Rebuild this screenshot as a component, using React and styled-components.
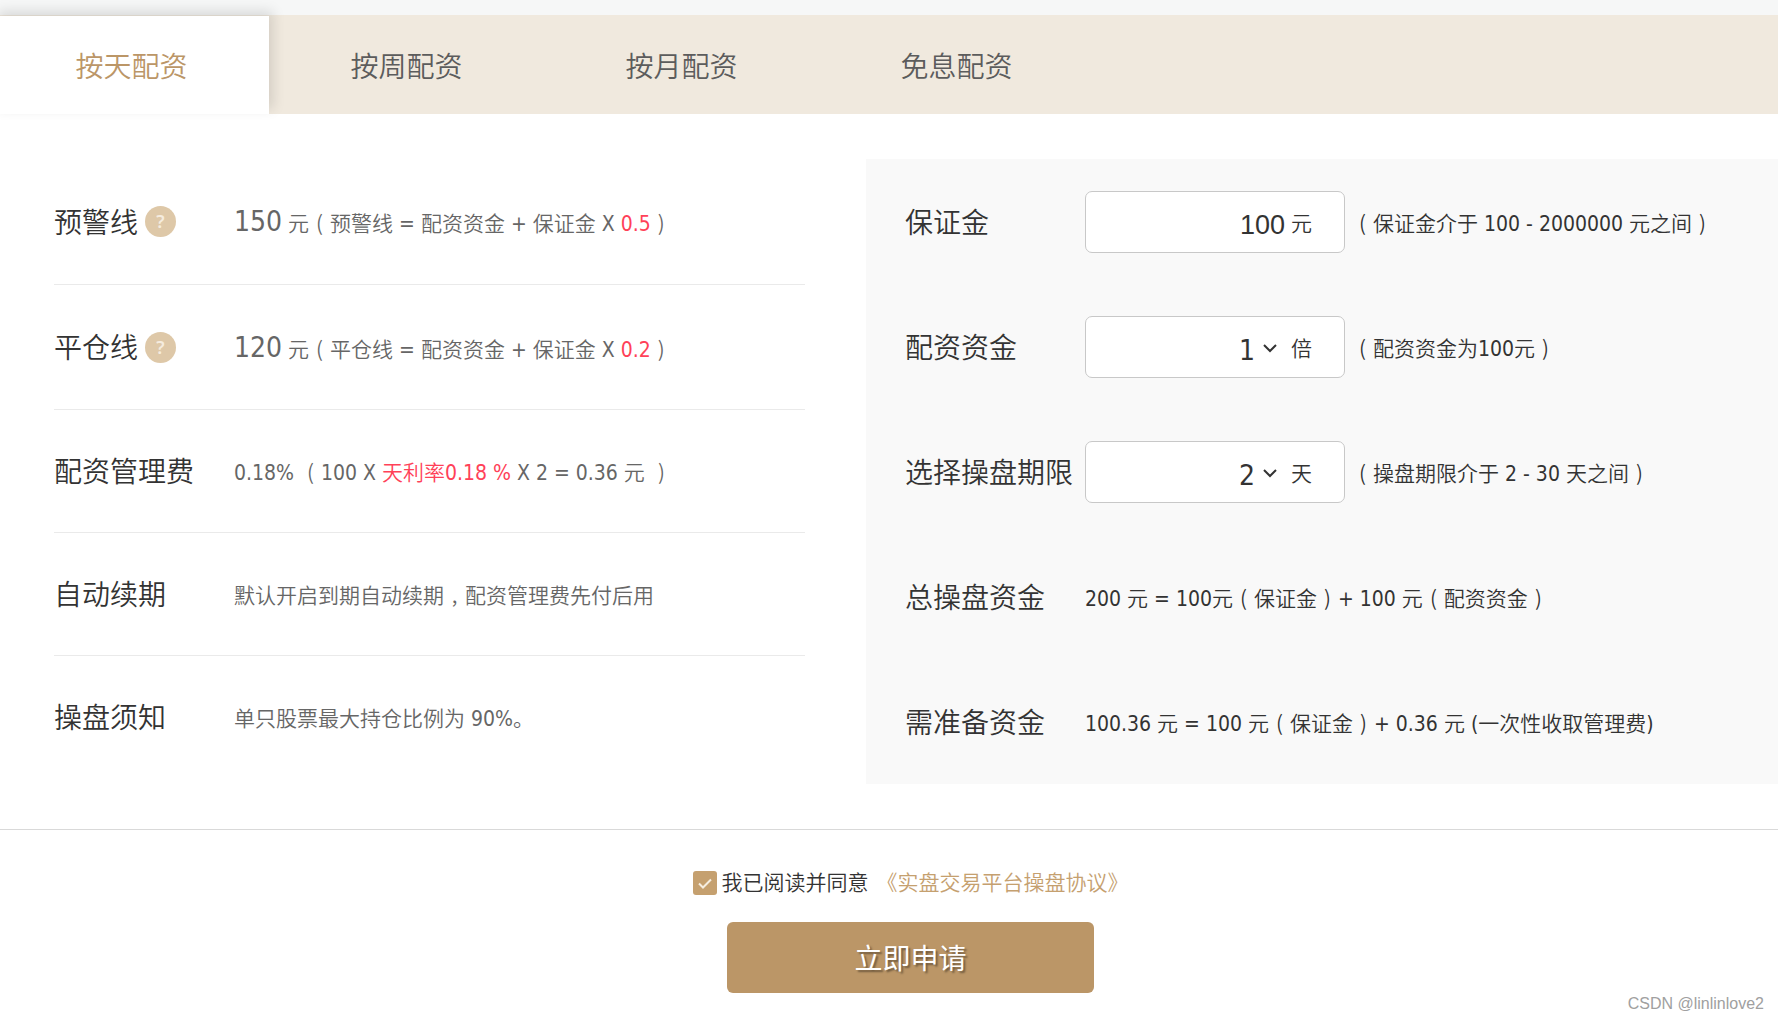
import React, { useState } from "react";
import styled, { createGlobalStyle } from "styled-components";

const GlobalStyle = createGlobalStyle`
  * {
    box-sizing: border-box;
  }
  body {
    margin: 0;
    background: #fff;
    color: #333;
    font-family: "DejaVu Sans Condensed", "Noto Sans CJK SC", sans-serif;
    font-size: 21px;
    font-weight: 350;
    line-height: 32px;
    overflow-x: hidden;
  }
  button, input, select {
    font: inherit;
    color: inherit;
  }
`;
const TopStrip = styled.div`
  height: 15px;
  background: #f6f7f7;
`;
const Tabs = styled.nav`
  display: flex;
  height: 99px;
  margin-left: -6px;
  background: #f0e9de;
`;
const Tab = styled.button`
  flex: 0 0 275px;
  border: none;
  margin-top: ${(props) => (props.$active ? "1px" : "0")};
  padding: 6px 0 0;
  font-size: 28px;
  cursor: pointer;
  color: ${(props) => (props.$active ? "#bb9667" : "#5c5c5c")};
  background: ${(props) => (props.$active ? "#fff" : "transparent")};
  box-shadow: ${(props) =>
    props.$active ? "4px -5px 12px rgba(0, 0, 0, 0.12)" : "none"};
`;
const Main = styled.main`
  display: grid;
  grid-template-columns: minmax(0, 14fr) minmax(0, 17fr);
  column-gap: 61px;
  padding: 45px 0 45px 54px;
  border-bottom: 1px solid #d9d9d9;
`;
const Info = styled.dl`
  margin: 0;
  color: #666;
`;
const InfoRow = styled.div`
  display: flex;
  align-items: center;
  min-height: ${(props) => (props.$tall ? "125px" : "123px")};
  & + & {
    border-top: 1px solid #eaeaea;
  }
`;
const Term = styled.dt`
  flex: 0 0 180px;
  display: flex;
  align-items: center;
  gap: 7px;
  font-size: 28px;
  color: #333;
  white-space: nowrap;
  & span {
    padding-top: 4px;
  }
`;
const Value = styled.dd`
  margin: 0;
  padding-top: 3px;
  white-space: nowrap;
`;
const Help = styled.button`
  width: 31px;
  height: 31px;
  border: none;
  border-radius: 50%;
  padding: 0;
  background: #dec8a8;
  color: #f5ecdf;
  font-family: "Noto Sans", sans-serif;
  font-size: 18px;
  font-weight: 600;
  line-height: 31px;
`;
const Big = styled.span`
  font-size: 28px;
`;
const Red = styled.span`
  color: #ff4158;
`;
/* brackets and commas sit in the middle of a full-width cell */
const Cell = styled.span`
  display: inline-block;
  width: 1em;
  font-family: "Noto Sans CJK SC", sans-serif;
  line-height: 1;
  text-align: center;
`;
const Panel = styled.form`
  padding-left: 39px;
  background: #f9f9f9;
`;
const FormRow = styled.div`
  display: flex;
  align-items: center;
  height: 125px;
  white-space: nowrap;
`;
const Label = styled.label`
  flex: 0 0 180px;
  padding-top: 4px;
  font-size: 28px;
`;
const Field = styled.div`
  flex: none;
  width: 260px;
  display: flex;
  align-items: center;
  height: 62px;
  margin-right: 7px;
  padding: 4px 32px 0 16px;
  border: 1px solid #c8c8c8;
  border-radius: 7px;
  background: #fff;
`;
const Amount = styled.input`
  flex: 1;
  min-width: 0;
  border: none;
  padding: 2px 0 0;
  margin-right: 6px;
  outline: none;
  background: transparent;
  font-family: "Liberation Sans", Arial, sans-serif;
  font-size: 27px;
  text-align: right;
`;
const Select = styled.select`
  flex: 1;
  appearance: none;
  border: none;
  padding: 4px 0 0;
  outline: none;
  background: transparent;
  font-size: 28px;
  text-align: right;
  text-align-last: right;
`;
const Chevron = styled.svg`
  flex: none;
  margin: 0 14px 0 8px;
  pointer-events: none;
`;
const Text = styled.div`
  padding-top: 4px;
`;
const Footer = styled.footer`
  display: flex;
  flex-direction: column;
  align-items: center;
  padding: 37px 0 0 43px;
`;
const Agree = styled.div`
  display: flex;
  align-items: center;
  height: 32px;
`;
const Check = styled.input`
  appearance: none;
  width: 24px;
  height: 24px;
  margin: 0 5px 0 0;
  border-radius: 3px;
  background: #c5a06f;
  &:checked {
    background: #c5a06f
      url("data:image/svg+xml,%3Csvg xmlns='http://www.w3.org/2000/svg' viewBox='0 0 24 24'%3E%3Cpath d='M6 12.5l4 4 8-8' fill='none' stroke='%23f5ede0' stroke-width='2'/%3E%3C/svg%3E")
      center / 24px 24px no-repeat;
  }
`;
const Agreement = styled.a`
  margin-left: 8px;
  color: #c5a06f;
  text-decoration: none;
`;
const Apply = styled.button`
  width: 367px;
  height: 71px;
  margin-top: 23px;
  border: none;
  border-radius: 6px;
  padding: 4px 0 0;
  background: #bb9667;
  color: #fff;
  font-size: 28px;
  font-weight: 400;
  text-shadow: 2px 2px 2px rgba(0, 0, 0, 0.4);
  cursor: pointer;
`;
const Watermark = styled.div`
  padding: 3px 14px 7px 0;
  color: #a0a0a0;
  font: 16px/16px "Liberation Sans", Arial, sans-serif;
  text-align: right;
`;

const tabs = ["按天配资", "按周配资", "按月配资", "免息配资"];

const Open = () => <Cell>(</Cell>;
const Close = () => <Cell>)</Cell>;

const Arrow = () => (
  <Chevron width="14" height="9" viewBox="0 0 14 9" aria-hidden="true">
    <path d="M1 1l6 6 6-6" fill="none" stroke="#333" strokeWidth="2" />
  </Chevron>
);

const App = () => {
  const [active, setActive] = useState(0);
  const [amount, setAmount] = useState("100");
  const [times, setTimes] = useState("1");
  const [days, setDays] = useState("2");
  const [agreed, setAgreed] = useState(true);
  return (
    <>
      <GlobalStyle />
      <TopStrip />
      <Tabs>
        {tabs.map((tab, index) => (
          <Tab
            key={tab}
            type="button"
            $active={index === active}
            onClick={() => setActive(index)}
          >
            {tab}
          </Tab>
        ))}
      </Tabs>
      <Main>
        <Info>
          <InfoRow $tall>
            <Term>
              <span>预警线</span>
              <Help type="button">?</Help>
            </Term>
            <Value>
              <Big>150</Big> 元<Open />
              预警线 = 配资资金 + 保证金 X <Red>0.5</Red>
              <Close />
            </Value>
          </InfoRow>
          <InfoRow $tall>
            <Term>
              <span>平仓线</span>
              <Help type="button">?</Help>
            </Term>
            <Value>
              <Big>120</Big> 元<Open />
              平仓线 = 配资资金 + 保证金 X <Red>0.2</Red>
              <Close />
            </Value>
          </InfoRow>
          <InfoRow>
            <Term>
              <span>配资管理费</span>
            </Term>
            <Value>
              0.18% <Open />
              100 X <Red>天利率0.18 %</Red> X 2 = 0.36 元 <Close />
            </Value>
          </InfoRow>
          <InfoRow>
            <Term>
              <span>自动续期</span>
            </Term>
            <Value>
              默认开启到期自动续期<Cell>,</Cell>配资管理费先付后用
            </Value>
          </InfoRow>
          <InfoRow>
            <Term>
              <span>操盘须知</span>
            </Term>
            <Value>单只股票最大持仓比例为 90%。</Value>
          </InfoRow>
        </Info>
        <Panel id="apply" onSubmit={(e) => e.preventDefault()}>
          <FormRow>
            <Label htmlFor="amount">保证金</Label>
            <Field>
              <Amount
                id="amount"
                value={amount}
                onChange={(e) => setAmount(e.target.value)}
              />
              元
            </Field>
            <Text>
              <Open />
              保证金介于 100 - 2000000 元之间
              <Close />
            </Text>
          </FormRow>
          <FormRow>
            <Label htmlFor="times">配资资金</Label>
            <Field>
              <Select
                id="times"
                value={times}
                onChange={(e) => setTimes(e.target.value)}
              >
                {[1, 2, 3, 4, 5].map((n) => (
                  <option key={n}>{n}</option>
                ))}
              </Select>
              <Arrow />倍
            </Field>
            <Text>
              <Open />
              配资资金为100元
              <Close />
            </Text>
          </FormRow>
          <FormRow>
            <Label htmlFor="days">选择操盘期限</Label>
            <Field>
              <Select
                id="days"
                value={days}
                onChange={(e) => setDays(e.target.value)}
              >
                {[2, 5, 10, 20, 30].map((n) => (
                  <option key={n}>{n}</option>
                ))}
              </Select>
              <Arrow />天
            </Field>
            <Text>
              <Open />
              操盘期限介于 2 - 30 天之间
              <Close />
            </Text>
          </FormRow>
          <FormRow>
            <Label as="span">总操盘资金</Label>
            <Text>
              200 元 = 100元
              <Open />
              保证金
              <Close />+ 100 元<Open />
              配资资金
              <Close />
            </Text>
          </FormRow>
          <FormRow>
            <Label as="span">需准备资金</Label>
            <Text>
              100.36 元 = 100 元<Open />
              保证金
              <Close />+ 0.36 元 (一次性收取管理费)
            </Text>
          </FormRow>
        </Panel>
      </Main>
      <Footer>
        <Agree>
          <Check
            id="agree"
            type="checkbox"
            checked={agreed}
            onChange={(e) => setAgreed(e.target.checked)}
          />
          <label htmlFor="agree">我已阅读并同意</label>
          <Agreement href="#agreement">《实盘交易平台操盘协议》</Agreement>
        </Agree>
        <Apply type="submit" form="apply">
          立即申请
        </Apply>
      </Footer>
      <Watermark>CSDN @linlinlove2</Watermark>
    </>
  );
};

export default App;
